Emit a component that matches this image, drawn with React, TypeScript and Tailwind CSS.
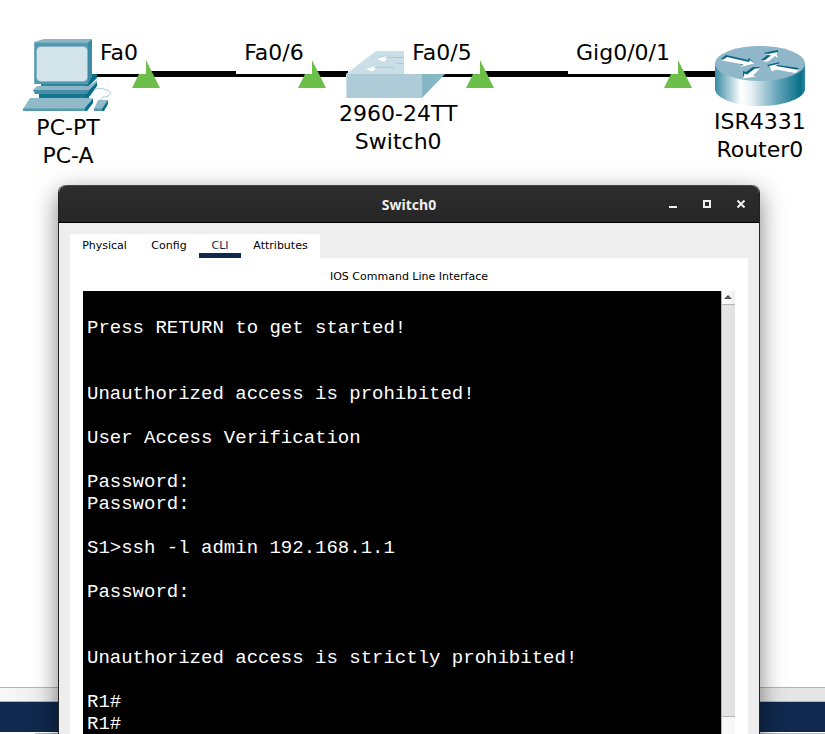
import { ReactNode, useState } from "react";

const output = [
  "",
  "Press RETURN to get started!",
  "",
  "",
  "Unauthorized access is prohibited!",
  "",
  "User Access Verification",
  "",
  "Password:",
  "Password:",
  "",
  "S1>ssh -l admin 192.168.1.1",
  "",
  "Password:",
  "",
  "",
  "Unauthorized access is strictly prohibited!",
  "",
  "R1#",
  "R1#",
].join("\n");

const tabs = ["Physical", "Config", "CLI", "Attributes"];

function PcIcon() {
  return (
    <svg className="block" width="90" height="75" viewBox="0 0 90 75" aria-hidden="true">
      <path d="M11 3 21 0H69L65 3Z" fill="#8db5c6" />
      <path d="M65 35H74V39L66 47H62Z" fill="#086d87" />
      <path d="M65 3 69 0V38L65 45Z" fill="#3d8ba3" />
      <rect x="11" y="3" width="54" height="42" fill="#5299b0" />
      <path d="M11 3H65V4H12V45H11Z" fill="#79afc2" />
      <rect x="13" y="7" width="52" height="36" rx="5" fill="#85b4c5" />
      <rect x="14" y="8" width="50" height="34" rx="4" fill="#d3e4eb" />
      <path d="M18 45H68L62 47H18Z" fill="#2f839d" />
      <path d="M14 47 10 51H66L74 43V41L66 47Z" fill="#8db7c8" />
      <path d="M16 54H66V60H16Z" fill="#157892" />
      <path d="M66 51 74 43V47L67 57 62 60V54Z" fill="#096d87" />
      <path d="M10 51H66L64 55H12Z" fill="#488fa8" />
      <path d="M7 59H69L62 70H0Z" fill="#91b9ca" />
      <path d="M0 69.500H63V72H0Z" fill="#5399af" />
      <path d="M62 69 70 59V64L64 72H62Z" fill="#08708a" />
      <path
        d="M71 51C76 48 80 50 84 51C91 54 86 58 80 58Q78 59 78 62"
        fill="none"
        stroke="#a6c9d7"
        strokeWidth="1"
      />
      <path d="M75 61H85L80 70H71Z" fill="#91b9ca" />
      <path d="M71 69.500H80V72H71Z" fill="#5198ad" />
      <path d="M85 61V65L81 72H79V70Z" fill="#08708a" />
    </svg>
  );
}

function SwitchIcon() {
  return (
    <svg className="block" width="104" height="49" viewBox="0 0 104 49" aria-hidden="true">
      <path d="M0 23 30 0H99L76 23Z" fill="#c9dee6" />
      <path d="M0 23H76V47H0Z" fill="#adccd7" />
      <path d="M76 23H99L76 47Z" fill="#86b7c5" />
      <path d="M0 23H1V47H0Z" fill="#c9dee6" />
      <path d="M40 6H60V7H40Z" fill="#adc9d2" />
      <path d="M31 8 41 5 39 7 41 8 38 11Z" fill="#fff" />
      <path d="M31 7 41 4 40 5Z" fill="#adc9d2" />
      <path d="M52 12H62V13H50Z" fill="#adc9d2" />
      <path d="M28 16H48V17H28Z" fill="#adc9d2" />
      <path d="M20 18 30 15 28 17 30 18 26 20.500Z" fill="#fff" />
    </svg>
  );
}

function RouterIcon() {
  return (
    <svg className="block" width="90" height="62" viewBox="0 0 90 62" aria-hidden="true">
      <defs>
        <linearGradient id="router-side">
          <stop offset="0" stopColor="#398ba2" />
          <stop offset=".29" stopColor="#fff" />
          <stop offset=".4" stopColor="#e8f1f4" />
          <stop offset=".68" stopColor="#6ba8bb" />
          <stop offset=".95" stopColor="#08708a" />
          <stop offset="1" stopColor="#3085a0" />
        </linearGradient>
      </defs>
      <path d="M0 18V43C0 52 20 60 45 60S90 52 90 43V18Z" fill="url(#router-side)" />
      <ellipse cx="45" cy="17.500" rx="45" ry="17.500" fill="#90b7c9" />
      <path d="M6 13 11 9 33 14 34 12 38 16 25 19 28 17Z" fill="#08657e" />
      <path d="M7 14.500 12 11 34 16 35 14 39 17.500 25 21 29 18.500Z" fill="#fff" />
      <path d="M46 14 54 8 48 7 63 4V10L60 8 53 14Z" fill="#08657e" />
      <path d="M48 15.500 56 9.500 51 8.500 62.500 6V12L60 10 53 15.500Z" fill="#fff" />
      <path d="M45 21H38L31 26 28 25V31L40 29 37 28Z" fill="#08657e" />
      <path d="M45 22.500H40L32 28.500 29.500 27.500 28 32.500 41 30.500 38 29.500Z" fill="#fff" />
      <path d="M52 19 65 16 62 19 84 22 81 25 60 22 57 24Z" fill="#08657e" />
      <path d="M54 20 63 18 61 20 84 24 80 27 61 23.500 57 25.500Z" fill="#fff" />
    </svg>
  );
}

function Link({ className }: { className: string }) {
  return <div className={`absolute top-[71px] h-1.5 bg-black ${className}`} />;
}

function LinkUp({ className }: { className: string }) {
  return (
    <svg
      className={`absolute top-[60px] ${className}`}
      width="28"
      height="28"
      viewBox="0 0 28 28"
      aria-hidden="true"
    >
      <path d="M14 0 28 28H0Z" fill="#6cc04a" />
    </svg>
  );
}

function PortLabel({ className, children }: { className: string; children: ReactNode }) {
  return (
    <div
      className={`absolute top-[39px] h-[35px] bg-white text-center whitespace-nowrap ${className}`}
    >
      {children}
    </div>
  );
}

function Device({
  className,
  icon,
  names,
}: {
  className: string;
  icon: ReactNode;
  names: string[];
}) {
  return (
    <div className={`absolute flex flex-col items-center whitespace-nowrap ${className}`}>
      {icon}
      {names.map((name) => (
        <span key={name}>{name}</span>
      ))}
    </div>
  );
}

function Topology() {
  return (
    <section
      aria-label="Network topology"
      className="relative h-[185px] text-[22px] leading-7 text-black"
    >
      <Link className="left-[92px] w-[256px]" />
      <Link className="left-[430px] w-[290px]" />
      <Device className="top-[39px] left-[23px]" icon={<PcIcon />} names={["PC-PT", "PC-A"]} />
      <Device
        className="top-[51px] left-[339px]"
        icon={<SwitchIcon />}
        names={["2960-24TT", "Switch0"]}
      />
      <Device
        className="top-[46px] left-[714px]"
        icon={<RouterIcon />}
        names={["ISR4331", "Router0"]}
      />
      <LinkUp className="left-[132px]" />
      <LinkUp className="left-[298px]" />
      <LinkUp className="left-[466px]" />
      <LinkUp className="left-[664px]" />
      <PortLabel className="left-[92px] w-[54px]">Fa0</PortLabel>
      <PortLabel className="left-[236px] w-[76px]">Fa0/6</PortLabel>
      <PortLabel className="left-[404px] w-[76px]">Fa0/5</PortLabel>
      <PortLabel className="left-[568px] w-[110px]">Gig0/0/1</PortLabel>
    </section>
  );
}

function TitleBar() {
  return (
    <header className="relative flex h-[38px] shrink-0 items-center justify-center rounded-t-lg border-t border-b border-t-[#454848] border-b-black bg-linear-to-b from-[#2d2d2d] to-[#262626] pt-0.5 text-[#eeeeec]">
      <h1 className="font-['Noto_Sans'] text-sm font-bold">Switch0</h1>
      <div className="absolute inset-y-0 right-[3px] flex items-center gap-1">
        <button aria-label="Minimize" className="flex size-[30px] items-center justify-center">
          <svg width="8" height="8" viewBox="0 0 8 8">
            <path d="M0 6H8V8H0Z" fill="currentColor" />
          </svg>
        </button>
        <button aria-label="Maximize" className="flex size-[30px] items-center justify-center">
          <svg width="8" height="8" viewBox="0 0 8 8">
            <path d="M1 1H7V7H1Z" fill="none" stroke="currentColor" strokeWidth="2" />
          </svg>
        </button>
        <button aria-label="Close" className="flex size-[30px] items-center justify-center">
          <svg width="8" height="8" viewBox="0 0 8 8">
            <path d="M.5.5 7.5 7.5M7.5.5.5 7.5" stroke="currentColor" strokeWidth="2" />
          </svg>
        </button>
      </div>
    </header>
  );
}

function ScrollBar() {
  return (
    <div className="flex w-3.5 shrink-0 flex-col border-l border-[#b4b4b4] bg-[#f7f7f7]">
      <button
        aria-label="Scroll up"
        className="flex h-[13px] shrink-0 items-center justify-center bg-linear-to-r from-white to-[#eeeeee]"
      >
        <svg width="9" height="5" viewBox="0 0 9 5">
          <path d="M4 0 8 4H0Z" fill="#555" />
        </svg>
      </button>
      <div className="h-[413px] border-y border-[#b4b4b4] bg-linear-to-r from-[#e5e5e5] to-[#e1e1e1]" />
    </div>
  );
}

function DeviceWindow() {
  const [active, setActive] = useState("CLI");
  return (
    <main className="absolute top-[185px] right-[65px] -bottom-10 left-[58px] flex flex-col rounded-t-lg border-x border-[#232323] bg-[#eeeeee] shadow-[0_8px_24px_rgba(0,0,0,0.5)]">
      <TitleBar />
      <div className="flex min-h-0 flex-1 flex-col px-[11px] pt-[11px] text-[11px] text-black">
        <div
          role="tablist"
          className="grid h-6 w-[250px] shrink-0 grid-cols-[69px_60px_42px_79px] bg-white"
        >
          {tabs.map((tab) => (
            <button
              key={tab}
              role="tab"
              aria-selected={tab === active}
              onClick={() => setActive(tab)}
              className={`h-6 border-b-[5px] pt-[5px] text-center leading-[14px] whitespace-nowrap ${
                tab === active ? "border-[#10294e] text-[#10294e]" : "border-transparent"
              }`}
            >
              {tab}
            </button>
          ))}
        </div>
        <div role="tabpanel" className="flex min-h-0 flex-1 flex-col bg-white px-[13px]">
          <h2 className="h-[33px] shrink-0 pt-[11px] text-center leading-4">
            IOS Command Line Interface
          </h2>
          <div className="flex min-h-0 flex-1">
            <pre className="min-w-0 flex-1 overflow-hidden bg-black px-1 pt-1 font-['Liberation_Mono',monospace] text-[19px] leading-[22px] text-white">
              {output}
            </pre>
            <ScrollBar />
          </div>
        </div>
      </div>
    </main>
  );
}

export default function App() {
  return (
    <div className="relative flex h-screen flex-col overflow-hidden bg-white font-['DejaVu_Sans',sans-serif]">
      <Topology />
      <footer className="mt-auto border-t border-[#b4b4b4]">
        <div className="h-3.5 border-b border-[#b4b4b4] bg-linear-to-r from-[#f8f8f8] to-[#e5e5e5] to-10%" />
        <div className="h-[30px] bg-[#10294e]" />
        <div className="ml-[35px] h-0.5 border-b border-[#bbbbbb] bg-white" />
      </footer>
      <DeviceWindow />
    </div>
  );
}
